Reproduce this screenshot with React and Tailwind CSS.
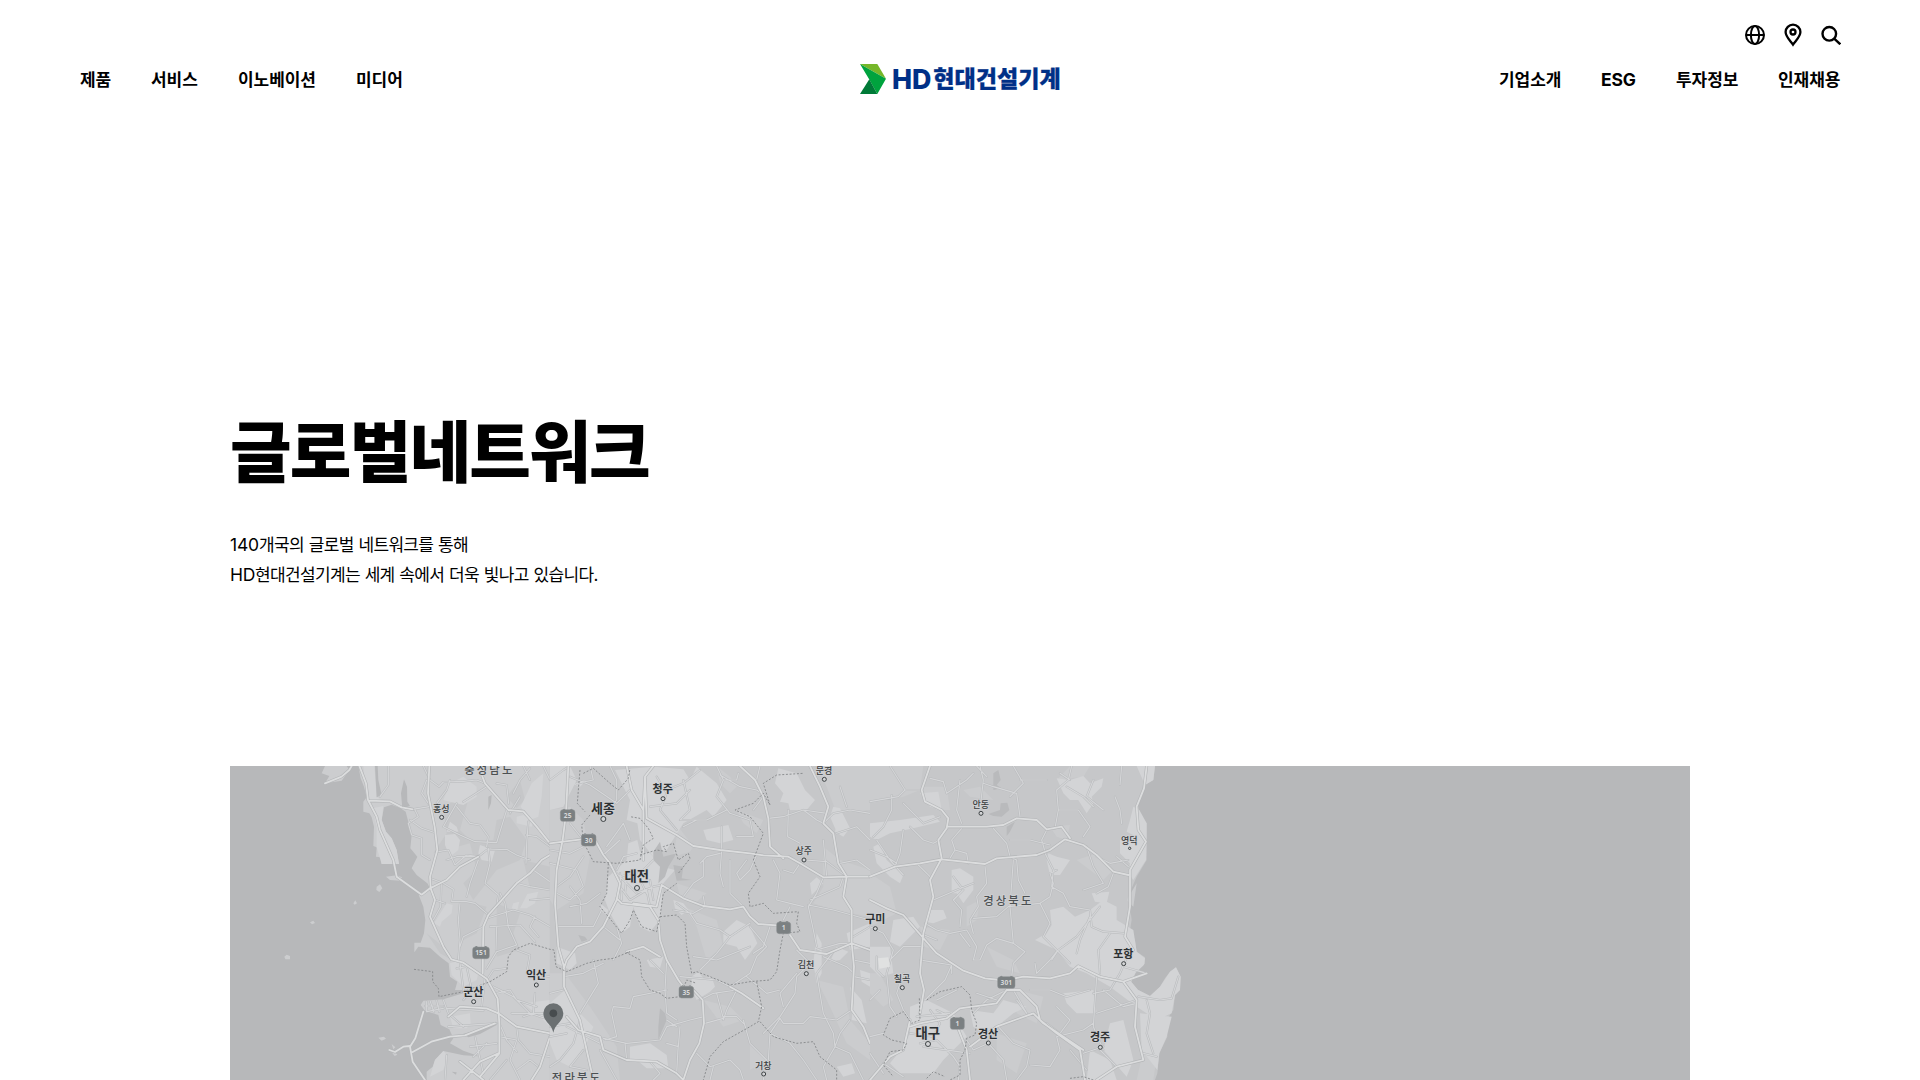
const SANS = "font-['Inter','Noto_Sans_CJK_KR',sans-serif]";

const leftNav = [
  { label: '제품', w: 'w-[31px]' },
  { label: '서비스', w: 'w-[47px]' },
  { label: '이노베이션', w: 'w-[78px]' },
  { label: '미디어', w: 'w-[47px]' },
];
const rightNav = [
  { label: '기업소개', w: 'w-[62px]' },
  { label: 'ESG', w: 'w-[35px]' },
  { label: '투자정보', w: 'w-[62px]' },
  { label: '인재채용', w: 'w-[62px]' },
];

function Nav({ items }) {
  return (
    <nav className="flex gap-10 leading-[28px] font-bold text-black">
      {items.map((i) => (
        <a
          key={i.label}
          className={`${i.w} whitespace-nowrap ${i.label === 'ESG' ? 'text-[17.5px] tracking-[-0.01em]' : 'text-[17px] tracking-[-0.003em]'}`}
        >
          {i.label}
        </a>
      ))}
    </nav>
  );
}

function Logo() {
  return (
    <svg className="block h-10 w-[204px]" viewBox="0 0 204 40">
      <path d="M2 4H19.3L28 18.8Z" fill="#76b72a" />
      <path d="M2 4L28 18.8L19.3 34L11.3 19.5Z" fill="#00a33e" />
      <path d="M11.3 19.3L19.3 34H2Z" fill="#007a37" />
      <text x="33.9" y="28.9" fontSize="27.5" fontWeight="800" fill="#003087" textLength="39.5" lengthAdjust="spacingAndGlyphs" fontFamily="Inter">
        HD
      </text>
      <text x="75.3" y="27" fontSize="22.5" fontWeight="900" fill="#003087" stroke="#003087" strokeWidth="0.3" textLength="127.4" lengthAdjust="spacingAndGlyphs" fontFamily="Noto Sans CJK KR">
        현대건설기계
      </text>
    </svg>
  );
}

function TopIcons() {
  return (
    <div className="flex items-center gap-[18px] text-black">
      <svg className="h-5 w-5" viewBox="0 0 20 20" fill="none" stroke="currentColor" strokeWidth="2">
        <circle cx="10" cy="10" r="9" />
        <ellipse cx="10" cy="10" rx="4.1" ry="9" />
        <path d="M1 10H19" />
      </svg>
      <svg className="h-6 w-5" viewBox="0 0 20 24" fill="none" stroke="currentColor">
        <path d="M10 21.7C7 17.5 2.6 13.7 2.6 9.1a7.4 7.4 0 0 1 14.8 0C17.4 13.7 13 17.5 10 21.7Z" strokeWidth="2.3" />
        <circle cx="10" cy="9" r="2.5" strokeWidth="2.3" />
      </svg>
      <svg className="h-5 w-5" viewBox="0 0 20 20" fill="none" stroke="currentColor" strokeWidth="2.4">
        <circle cx="8.3" cy="8.8" r="6.8" />
        <path d="M13.2 13.6L19.3 19.3" />
      </svg>
    </div>
  );
}

// Map geometry is drawn in three adjoining 960-unit-wide tiles.
const westLand =
  'M385 18L392 55 402 80 410 112 400 125V155L418 160 425 172 432 200 430 258 440 262 438 290 452 292 455 312H507L500 270 485 235 468 215 455 180 462 142 485 134 512 145 527 155 536 190 545 225 541 265 562 290 545 325 560 345 592 370 600 384 566 404 580 440 586 480 582 520 572 548H553V577L565 560 600 563 630 590 656 610 660 650 682 665 675 690H700V700L640 718 580 722 572 735 585 752 625 765 632 795 658 808 670 835 660 850 700 872 747 889 700 886 640 873 615 900 608 920 590 935V960H960V18Z';
const westIslands = [
  'M275 40L285 18H350L358 30 335 62 285 70 298 48Z',
  'M468 350L500 346 516 352 510 362 480 360Z',
  'M440 380L450 373 457 385 448 396 439 390Z',
  'M370 430L376 421 381 430 374 434Z',
  'M240 487L250 482 255 489 246 493Z',
  'M163 590L170 584 180 588V598H166Z',
  'M445 833L462 830 468 836 455 842Z',
  'M478 868L490 872 502 884 494 888Z',
  'M485 852L496 862 490 868Z',
];
const westWater = [
  'M435 18H443L445 60 455 105 440 112Z',
  'M517 145L513 100 522 58 531 80 532 125 540 138Z',
  'M700 822L745 808 795 788 800 795 750 822 715 832Z',
  'M775 110L785 105 783 130 775 150Z',
  'M665 935L680 937 678 944Z',
];
const westLight = [
  'M400 18H433L440 112 460 122 420 125 405 70Z',
  'M428 145L460 138 455 180 468 215 485 235 500 270 507 312H455L440 262V200Z',
  'M905 70L940 40 935 110 925 170 900 180 872 140Z',
  'M860 170L880 165 910 185 905 200 860 190Z',
  'M660 70L700 50 740 80 740 110 700 135 660 125 640 120Z',
  'M645 225L675 222 690 240 685 270 660 290 645 255Z',
  'M750 255L770 262 795 270 785 305 755 300 745 280Z',
  'M650 430L668 435 665 460 635 485 630 500 612 490Z',
  'M892 402L925 395 915 430 890 445 870 445Z',
  'M850 430L868 425 862 450 845 445Z',
  'M660 185L680 200 685 215 650 215Z',
  'M660 770L720 760 722 790 710 805 670 805Z',
  'M880 730L960 720V800L930 770Z',
  'M660 610L690 600 745 640 740 660 700 680 665 645Z',
  'M615 900L640 873 655 890 640 930 600 950Z',
];
const westDark = [
  'M610 280L720 250 740 330 700 370 730 420 800 330 870 300 890 240 840 170 800 180 790 240 720 240 690 210 720 100 640 140 650 220Z',
  'M690 420L770 440 740 520 690 545Z',
  'M590 520L640 560 665 600 630 580Z',
  'M800 430L870 460 850 520 870 570 800 590Z',
  'M830 110L870 60 885 120 860 145Z',
  'M880 300L960 320V390L900 385Z',
];
const westMajor = [
  'M388 18L408 70 414 120 440 170 450 210 490 300 500 350 575 404',
  'M415 122L480 124 515 142 548 148',
  'M598 18L594 100 614 200 622 270 600 350 602 385 615 420 600 470 640 560 664 598 700 608 770 656 803 716 808 790V880L750 950',
  'M745 18L765 70 835 150 880 154 920 200 960 250',
  'M960 285L935 300 900 340 860 370 775 465 760 500 758 640',
  'M580 755L556 835 540 860 548 905 585 960',
  'M548 876L604 845 660 830 705 826 795 790',
  'M575 404L600 385 650 360 690 320 745 290',
  'M478 870L495 876 520 860 540 858',
  'M655 770L690 740 770 745 805 760 860 800 960 820',
  'M960 830L930 920 905 960',
  'M700 960L750 905 805 880',
  'M690 905L760 960',
  'M335 50L358 30 365 18M335 50L285 70',
];
const westMinor = [
  'M745 290L770 270 830 268 860 285 900 300', 'M600 355L640 370 670 388 665 425 705 424 735 430 770 460',
  'M475 18V75L450 110', 'M580 18L600 60 627 80 640 66 700 64 740 60 765 70', 'M548 148L598 140', 'M555 150L565 170 535 190 545 225 575 235V285L600 300', 'M540 180L575 205 615 218',
  'M590 60L575 100 595 130', 'M620 130L650 90 660 60', 'M680 140L720 190 750 195 775 230 770 260', 'M680 130L640 200 690 225 735 245 800 248 830 150', 'M770 80L700 125', 'M800 70L830 75 836 130',
  'M625 275L655 270 675 315 710 285 745 290', 'M775 265L780 310 765 370 805 405 800 440', 'M895 185L890 250 888 310', 'M888 225L920 230 960 260', 'M810 400L825 430 835 500 860 555 800 575 770 625',
  'M690 430L685 480 690 540 685 600', 'M650 300L680 290 740 290', 'M745 300L720 370 710 410', 'M634 370L632 440 610 480', 'M615 420L645 430', 'M760 500L700 530 690 560', 'M800 500L798 570', 'M770 475L850 450 900 465 960 500', 'M900 420L960 415', 'M860 370L900 380 960 390', 'M910 330L960 365', 'M915 470L900 500 925 530', 'M780 500L870 495 915 545',
  'M690 608L700 690', 'M680 625L710 620 725 690 700 720', 'M770 660L790 630 830 625', 'M765 655L755 740', 'M790 680L850 710 900 760 960 780', 'M860 570L900 585 890 640 960 650', 'M800 700L840 690 860 720 920 740', 'M650 745L760 752', 'M640 720L655 760 700 800', 'M590 725V755L640 745M600 722L612 757M620 722L628 756M585 738H640', 'M655 800L800 790', 'M735 830L760 940', 'M808 830L860 840 840 900 870 960', 'M808 790L830 840 860 875', 'M720 860L800 850', 'M650 885L645 960', 'M770 850L730 890', 'M860 800L865 840 900 880 960 890', 'M860 930L900 900 925 920', 'M830 900L780 960', 'M915 700L910 760 880 770', 'M845 760H960', 'M870 110L840 160', 'M940 18L960 60', 'M900 25L870 60 850 100', 'M880 18L900 60',
];

const midLight = [
  'M0 18H60L80 60 40 140 0 150Z', 'M195 30L310 20 400 28 420 60 440 20 500 70 530 120 490 170 470 150 400 190 350 270 310 290 270 240 262 190 230 180 240 120Z',
  'M235 250L262 240 270 275 300 280 335 320 375 330 340 370 330 480 300 515 270 500 250 440 240 500 215 520 180 460 165 420 175 350 230 300Z',
  'M685 25L740 40 765 90 795 120 770 150 720 150 715 130 690 125 700 100 675 70Z', 'M460 210L535 195 550 240 510 250 470 240Z',
  'M560 480L600 500 622 550 585 600 560 560 520 550 520 515Z', 'M425 650L445 635 460 655 485 650 495 680 480 695 440 720 425 690Z', 'M780 370L800 352 820 370 785 405Z',
  'M860 190L895 210 880 230 855 215Z', 'M850 140L870 145 900 205 860 215 840 170Z', 'M800 520L815 550V640L800 670 790 610Z', 'M290 600L340 590 330 625 300 620Z', 'M890 520L960 490V560L900 570Z', 'M860 560L895 575 870 600 840 605Z',
  'M930 630L960 640V680L935 665Z', 'M900 680L935 720 950 790 905 780 910 730Z', 'M240 860L300 850 350 885 355 925 290 925 260 900 240 900Z', 'M45 690L60 730 90 760 130 800 110 850 90 890 60 920 20 900 0 850V730Z', 'M20 560L75 580 80 610 60 630 20 610Z', 'M860 920L905 910 915 940 880 950Z', 'M370 420L400 430 415 450 395 465 375 445Z', 'M150 430L175 450 170 465 150 450Z', 'M65 70L110 60 90 80Z',
];
const midMid = [
  'M0 150L60 140 100 180 120 290 100 400 20 450 0 420Z', 'M500 18L540 50 560 80 540 100 510 70Z', 'M800 18H960V150L860 160 830 80Z', 'M820 260L870 300 960 330V470L850 450 790 430 820 380Z', 'M0 640L45 640 120 740 200 860 210 960H0Z', 'M380 370L470 400 440 425 390 410Z', 'M800 660L880 680 900 780 960 850V900L890 850 840 740Z', 'M560 150L640 180 620 220 580 190Z', 'M385 200L430 260 420 275 370 290Z', 'M400 440L500 480 520 560 470 600 440 500Z', 'M460 720L540 740 580 780 520 800Z', 'M600 850L650 900 600 930Z',
];
const midDark = [
  'M310 275L330 245 340 290 380 280 355 320 345 350 325 370 330 320 310 300Z', 'M370 315L400 320 395 355 425 360 380 362 375 340Z', 'M85 525L105 530 112 540 95 545Z', 'M330 745L345 760 350 780 335 815 325 840V800Z',
];
const midMajor = [
  'M55 18L48 160 38 240 20 330 15 430 25 560 42 620V680L90 780 130 960', 'M0 250L40 245 95 238', 'M285 50L280 150V300', 'M310 18L285 50 290 175 380 225 430 258 510 270 600 280 640 286 715 290 750 310 820 352 890 350 960 350',
  'M230 18L245 90 280 150', 'M135 240L160 285 180 310 210 370 200 420 160 500 120 545 80 560 50 600 40 630', 'M200 415L215 430 300 440 325 480 330 540 350 600 385 660 400 680', 'M250 430L320 440 335 375 400 415 460 438 540 448 580 440 600 470 625 492 680 496', 'M720 525L750 570 830 582 905 550 960 570', 'M780 18L810 80 835 140 820 190 850 220 865 310 890 350 880 410 905 450V550L912 620 905 750 940 800 960 850', 'M430 690L458 720 462 790 448 850 420 900 400 960',
  'M570 18L615 60 640 110 655 175 660 260 700 295', 'M50 770L85 810 150 830 160 870 230 900 320 905 380 940 400 960', 'M230 575L280 560 330 590', 'M540 680L575 700 640 745',
];
const midMinor = [
  'M850 575L800 640 820 760', 'M655 900L660 820 690 775', 'M390 650L500 660 540 680', 'M20 500L130 500 155 450',
  'M0 60L40 30 60 18', 'M60 50L120 75 200 130 240 90', 'M180 18L200 60 200 120 160 170', 'M60 190L100 240', 'M0 270L60 280 100 260', 'M0 310L80 330 100 380 60 420 20 400', 'M100 290L60 350 20 380', 'M90 420L95 490', 'M60 440L110 430 150 400', 'M180 320L230 370 260 400 310 380 335 375', 'M210 350L280 330 310 300', 'M210 380L240 420 290 390 300 440', 'M200 330L220 290 260 280', 'M170 260L220 190 240 240', 'M160 285L210 240', 'M320 50L350 100 330 150 380 210', 'M350 90L400 70 450 30', 'M400 60L420 150 390 180 470 180 530 150', 'M420 90L380 130 300 140', 'M500 18L520 60 500 110 540 160', 'M510 45L570 80 620 90 650 110', 'M540 160L600 180 610 230 560 230', 'M640 110L610 150', 'M655 175L700 170 760 150 830 160', 'M715 150L713 230 750 250', 'M760 150L800 180 820 190', 'M515 200V270L510 340 520 380', 'M620 285L600 330 570 360 560 340 590 300', 'M540 300V400L580 440', 'M450 310L470 290 510 280', 'M460 300L460 350 430 370 400 410', 'M460 410L465 440 430 460 370 450', 'M380 430L420 460 440 490 510 510 540 530 500 580 450 630', 'M540 530L600 490', 'M600 500L650 560 620 590 600 640 540 680', 'M660 500L640 560 610 580', 'M670 300L690 340 680 420 720 430 760 440', 'M750 310L730 340 700 330', 'M765 300L830 305 890 350', 'M820 190L850 160 900 150 960 160', 'M870 80L890 140', 'M820 352L800 400 775 440 790 510 800 560', 'M775 435L850 450 960 480', 'M780 420L870 380 880 350', 'M720 440L700 480', 'M860 220L920 200 960 240', 'M870 310L920 300 960 330', 'M820 240L830 350', 'M800 570L870 550 905 550', 'M740 570L780 610 740 650 735 700 690 770 640 820', 'M820 590L890 620 912 640', 'M912 650L960 660', 'M910 600L960 610', 'M740 640L690 700 700 740', 'M690 775L700 790 760 790 780 770 860 780 905 750', 'M820 760L850 820 855 860 820 920 830 960', 'M855 860L900 880 940 960', 'M660 820L720 850 760 900 800 960', 'M580 780L600 850 650 900 640 960', 'M520 770L560 770 580 790', 'M465 790L520 775 500 700', 'M560 690L530 750 520 780', 'M450 720L490 700 560 690', 'M462 770L420 780 350 800 330 840 230 850 160 835', 'M385 850L380 940', 'M390 800L385 860 350 850', 'M350 780L380 800', 'M350 600L345 690 350 760 380 780', 'M250 710L240 745 190 740 185 760 200 830 165 840', 'M250 710L350 690', 'M225 850L230 900', 'M300 905L330 940 310 960', 'M130 600L145 670 90 760', 'M40 690L0 700', 'M42 650L100 640 160 610', 'M200 500L215 550 190 600', 'M160 500L210 540', 'M300 600L340 640', 'M430 590L500 600 600 560', 'M0 800L60 790M0 830L50 820', 'M90 780L70 850 30 900 0 920', 'M50 800L150 850', 'M100 870L60 920 110 930', 'M150 870L200 960', 'M440 880L480 920 540 900 570 930 580 960', 'M490 920L480 960', 'M590 650L650 700 690 690', 'M900 780L870 820 855 860', 'M960 500L910 530', 'M120 18L130 60 80 70', 'M520 60H560L565 40', 'M400 200L440 180M630 18L620 60', 'M60 380L90 420', 'M210 340L215 420M230 345L225 400M300 360L310 420M260 340L290 400',
];

const eastLight = [
  'M560 55L600 60 640 48 660 70 700 55 695 80 665 110 670 130 650 160 625 120 600 120 580 100Z', 'M790 140L808 150 830 190V235L800 230 770 215 780 180Z', 'M750 240L800 230 830 235 828 300 790 360 775 340 780 310 750 280Z', 'M540 450L580 440 615 470 660 450 700 420 740 440 740 480 790 510 800 575 825 595 820 625 785 665 805 690 840 708 870 680 900 635 918 622 932 650 930 690 915 705 905 760 860 780 800 740 720 680 650 640 600 620 560 570 495 540 530 520 545 495Z', 'M245 330L270 325 310 350 310 390 280 430 260 400 245 400Z', 'M535 280L560 290 600 300 570 345 540 345 530 300Z', 'M70 480L130 470 150 500 90 560 60 545Z', 'M150 100L205 95 215 150 180 140Z', 'M0 190L90 180 190 165 210 185 130 205 60 220 20 240 0 230Z', 'M175 450L220 450 230 475 190 490 165 485Z', 'M580 700L670 690 680 760 620 760 590 730Z', 'M665 400L718 395 710 430 675 425Z', 'M120 740L170 720 250 760 290 830 250 870 220 900 190 940 90 940 60 910 100 860 120 820Z', 'M720 790L760 780 790 900 770 950 700 870Z', 'M810 760L905 770 890 830 868 880 862 930 815 870Z', 'M300 750L370 760 400 720 470 740 430 760 380 800 340 820 310 800Z', 'M660 870L720 900 740 960H650Z', 'M800 18H855L850 60 825 75Z', 'M0 560L60 560 70 640 30 650 0 620Z', 'M10 260L30 250 50 300 100 345 90 370 60 350 20 310Z',
];
const eastMid = [
  'M0 18H160L150 90 100 110 0 130Z', 'M0 340L60 380 80 460 0 500Z', 'M30 640L70 720 40 740 0 700V640Z', 'M150 80L230 80 240 150 200 150Z', 'M280 90L330 80 370 120 300 110Z', 'M540 200L600 195 590 240 560 230Z', 'M350 560L430 600 450 640 380 620Z', 'M290 440L330 420 320 480 290 500Z', 'M560 60L600 18H660L640 50Z', 'M620 300L680 280 730 330 700 360Z', 'M440 690L520 710 500 790 440 760Z', 'M820 870L860 890 850 960H800Z', 'M380 820L470 850 440 940 380 900Z', 'M150 500L240 510 210 570 160 560Z', 'M800 370L790 440 770 420Z',
];
const eastDark = ['M370 40L385 30 392 60 380 75 395 85 370 90Z', 'M355 162L390 150 392 130 412 128 418 150 395 170 370 168Z', 'M410 200L435 185 420 215 410 228Z'];
const eastMajor = [
  'M180 18L155 90 165 125 215 150 235 175 230 205 205 240 215 295 180 360 190 410 160 520 150 640 162 690 150 760', 'M0 350L75 320 150 310 215 298 345 312 380 295 500 285 540 270 585 238 640 255 680 285 730 335 775 345', 'M0 420L50 445 100 465 165 540 200 580 280 632 345 655 390 660', 'M830 18L822 85 800 140 805 210 828 245 780 330V440L765 530 790 570', 'M435 655L460 650 540 655 600 640 625 618 690 650 760 665 830 640', 'M410 690L380 730 270 745 230 775 150 790 120 800', 'M410 690L450 690 500 740 510 780 560 820 630 870 645 960', 'M120 780L100 870 60 890 0 960', 'M235 200H350L400 195 440 175 500 180 530 208 575 200 600 235', 'M760 665L800 720 795 800 815 880 820 900 740 920 680 960', 'M262 800L290 870 300 960', 'M300 860L380 800 490 760 520 790 640 870',
];
const eastMinor = [
  'M60 18L105 90 150 90', 'M105 90L85 110 0 125', 'M65 105V150L40 200 10 230', 'M180 55L220 65 230 100 290 60 310 40', 'M270 60L260 150 275 190', 'M330 18L340 60 330 150', 'M340 70L370 80 440 100 450 170', 'M430 18L460 70 420 110', 'M450 60H530', 'M605 18L595 60 560 90 565 150 555 205', 'M590 80L640 110 670 140', 'M670 60L650 110 700 150', 'M755 18L750 75', 'M735 110L750 150 755 190', 'M565 150L625 150 660 200 640 230', 'M530 210L515 240 525 275', 'M370 205L410 250 420 290 440 300 445 360 465 400', 'M275 205L245 240 255 270 240 295', 'M255 270L290 280 295 310', 'M430 300L420 440 430 550 465 575 430 610 425 650', 'M430 550L380 535 350 555 330 600 310 600', 'M345 320L350 370 320 410 325 440 300 480 310 520', 'M190 420L260 390 310 370', 'M250 350L280 390 250 420 275 450 270 500', 'M165 490L200 510 240 520 290 510 320 560 310 600', 'M310 475L380 470 415 440', 'M415 440L510 430 540 410 550 370 540 340 560 330', 'M510 430L540 490 520 530 560 570 600 610', 'M525 280L550 330 545 380 580 400 600 440 660 450 665 500 700 515 765 520', 'M650 260L670 320 700 370 640 390', 'M680 290L720 310 775 300', 'M730 340L715 380 680 400', 'M775 320L740 290', 'M565 570L620 530 690 440', 'M620 580L630 540 660 470', 'M560 575L540 600 500 640', 'M690 640L685 570 720 520', 'M680 650L670 800 700 870', 'M780 570L750 640 720 690 670 700', 'M700 690L760 740 800 730', 'M680 760L740 740 800 720', 'M830 640L760 620', 'M805 710L870 720 905 715 925 650', 'M830 720L840 760 830 820 850 880', 'M820 880L860 890', 'M690 870L740 920', 'M100 130L140 170 160 190 210 170', 'M20 240L60 300 100 345', 'M0 270L50 290 80 310', 'M100 210L90 280 75 320', 'M120 200L160 240 190 250 210 240', 'M140 310L180 350', 'M0 500L40 520 70 570 50 640 60 740 80 770', 'M20 590V630L40 650M60 600L100 560 160 560', 'M150 600L180 605 245 615 225 660 165 720', 'M245 615V640', 'M100 640L80 700 100 750 120 780', 'M150 720L200 720 260 690', 'M180 750L210 790 190 830 120 820', 'M200 750L260 780M140 770L240 760', 'M150 850L200 840 250 890 270 920 265 960', 'M40 910L100 950', 'M355 850L400 900 410 960', 'M355 850L310 870 290 840', 'M385 800L430 850 480 870 470 920 440 960', 'M480 915L540 920 570 870 560 830', 'M480 690L540 690 590 710 660 690', 'M430 690L470 760 440 720', 'M530 790L570 820 600 780 560 740', 'M560 830L640 810 670 790', 'M640 880L700 860', 'M600 870L650 930', 'M410 690L350 720 310 760', 'M320 700L380 720', 'M30 690L0 720', 'M40 820L0 830', 'M0 880L40 940', 'M545 600L565 570M500 640L495 610', 'M160 860L300 880', 'M300 560L270 520', 'M570 40L600 60M350 50L320 18', 'M540 255L480 240 420 240', 'M150 520L200 540',
];
const borders = [
  'M552 628L608 635V665L625 685 627 710 700 695 780 665 830 635 835 590 850 570 900 550 960 568 972 570 978 620 1010 635 1070 610 1110 600 1150 595 1200 575 1190 578 1230 600 1235 650 1260 690 1290 700 1310 715 1350 710 1370 660 1400 670',
  'M1060 40L1090 25 1140 70 1165 90 1195 55 1200 25M1050 30L1045 90 1042 130 1065 155',
  'M1080 165L1055 195 1060 245 1090 305 1160 310 1230 300 1240 255 1270 235 1255 205 1230 175 1200 170',
  'M1230 285L1280 270 1310 275 1300 260 1330 250 1345 300 1375 280 1380 295 1345 340',
  'M1135 310L1130 400 1110 440 1135 470 1175 520 1200 480 1210 450 1235 500 1280 515 1290 470 1300 400 1340 370',
  'M1290 470L1340 465 1365 490 1370 560 1385 640 1400 635 1440 650 1500 675 1560 665 1620 660 1640 635 1650 570 1660 520 1710 515 1700 490 1705 455 1630 460 1600 430 1560 440 1555 400 1590 350 1570 300 1600 220 1560 170 1515 150 1570 130 1600 100 1620 135 1600 70 1640 45 1720 40',
  'M1580 665L1595 740 1585 785 1560 800 1480 845 1440 890 1420 960', 'M1590 785L1630 830 1700 850 1750 845 1770 890 1820 930 1820 960',
  'M2090 720L2130 695 2195 680 2220 705 2225 750 2240 790 2235 825 2210 835 2205 870 2190 900 2190 945 2160 960M2068 715L2070 780 2045 790 2020 755 1980 775 1960 825 1985 840 2030 850 2020 870 1980 875 1960 915 1990 950', 'M2520 955L2560 950 2590 960M2090 955L2110 935 2145 950',
];

const cities = [
  ['홍성', 634, 155, 27, 172, 500], ['군산', 730, 708, 33, 725, 700], ['익산', 918, 658, 33, 675, 700],
  ['청주', 1298, 99, 33, 116, 700], ['세종', 1119, 159, 39, 177, 700], ['대전', 1220, 363, 40, 384, 700],
  ['문경', 1782, 41, 27, 58, 500], ['상주', 1721, 282, 27, 300, 500], ['김천', 1728, 624, 27, 641, 500],
  ['거창', 1600, 926, 27, 942, 500], ['안동', 2252, 143, 27, 160, 500], ['영덕', 2698, 251, 27, 265, 500],
  ['구미', 1936, 489, 33, 506, 700], ['칠곡', 2016, 665, 27, 683, 500], ['포항', 2680, 593, 33, 611, 700],
  ['대구', 2093, 834, 40, 852, 700], ['경산', 2274, 833, 33, 849, 700], ['경주', 2610, 844, 33, 862, 700],
];
const provinces = [['충성남도', 775, 41], ['전라북도', 1038, 966], ['경상북도', 2332, 436]];
const shields = [['151', 753, 578, 50], ['25', 1013, 166, 44], ['30', 1076, 240, 44], ['1', 1661, 503, 42], ['35', 1369, 696, 44], ['301', 2329, 667, 52], ['1', 2182, 790, 42]];

const Fills = ({ list, color }) => <path d={list.join('')} fill={color} />;

function Roads({ major, minor }) {
  const a = minor.join('');
  const b = major.join('');
  return (
    <g fill="none" strokeLinejoin="round" strokeLinecap="round">
      <path d={a} stroke="#b8babc" strokeWidth="6.4" />
      <path d={a} stroke="#d5d6d8" strokeWidth="3.4" />
      <path d={b} stroke="#b3b5b7" strokeWidth="9" />
      <path d={b} stroke="#dcddde" strokeWidth="5.4" />
    </g>
  );
}

function NetworkMap() {
  return (
    <svg className="block h-full w-full" viewBox="0 0 1460 314" fontFamily="Noto Sans CJK KR">
      <rect width="1460" height="314" fill="#b7b8ba" />
      <g transform="translate(0 -6) scale(.333333)">
        <path d={westLand} fill="#cccdcf" />
        <Fills list={westIslands} color="#cccdcf" />
        <Fills list={westDark} color="#c6c7c9" />
        <Fills list={westLight} color="#d3d4d6" />
        <Fills list={westWater} color="#b7b8ba" />
        <Roads major={westMajor} minor={westMinor} />
        <g transform="translate(960 0)">
          <path d="M-1 18H961V960H-1Z" fill="#c6c7c9" />
          <Fills list={midMid} color="#cbccce" />
          <Fills list={midLight} color="#d3d4d6" />
          <Fills list={midDark} color="#b9babc" />
          <Roads major={midMajor} minor={midMinor} />
        </g>
        <g transform="translate(1920 0)">
          <path d="M0 18H855L850 60 825 75 818 105 803 130 812 170 830 190V300L800 350 785 385 780 440 785 480 780 510 795 540 800 575 825 592V612L797 638 784 665 805 690 840 708 870 680 885 655 900 635 918 622 932 650 930 690 915 705 910 750 890 780 892 830 868 880 862 940 855 960H0Z" fill="#c6c7c9" />
          <Fills list={eastMid} color="#cbccce" />
          <Fills list={eastLight} color="#d3d4d6" />
          <Fills list={eastDark} color="#b9babc" />
          <path d="M825 592V612L797 638 784 665 805 690 818 680 800 660 840 600Z" fill="#b7b8ba" />
          <Roads major={eastMajor} minor={eastMinor} />
          <path d="M24 595L55 592 60 620 28 626Z" fill="#e0e1e1" />
        </g>
        <path d={borders.join('')} fill="none" stroke="#858789" strokeWidth="2.7" strokeDasharray="6 5" strokeLinejoin="round" />
        {shields.map(([n, x, y, w]) => (
          <g key={n + x}>
            <rect x={x - w / 2} y={y - 17} width={w} height="35" rx="8" fill="#7b8082" stroke="#8e9294" strokeWidth="1.5" />
            <path d={`M${x - w / 2 + 6} ${y - 17}l5 -3 5 3h${w - 32}l5 -3 5 3z`} fill="#7b8082" />
            <text x={x} y={y + 8} fontSize="20" fontWeight="700" textAnchor="middle" fill="#d8d9da" fontFamily="Open Sans">{n}</text>
          </g>
        ))}
        <g textAnchor="middle" paintOrder="stroke" stroke="#d0d1d3" strokeWidth="5" strokeLinejoin="round">
          {cities.map(([name, x, y, size, , weight]) => (
            <text key={name} x={x} y={y} fontSize={size} fontWeight={weight} fill={weight === 700 ? '#2c3032' : '#3a3e40'}>{name}</text>
          ))}
          {provinces.map(([name, x, y]) => (
            <text key={name} x={x + 3} y={y} fontSize="34" fontWeight="500" letterSpacing="6.5" fill="#4c5052">{name}</text>
          ))}
        </g>
        {cities.map(([name, x, , size, cy]) => (
          <circle key={name} cx={x + (name === '구미' ? 0 : 1)} cy={cy} r={name === '영덕' ? 3.5 : size > 35 ? 7.5 : 6} fill="#d4d5d7" stroke="#33383a" strokeWidth="2.8" />
        ))}
        <path d="M970 818C965 791 940 785 940 760a30 30 0 0 1 60 0C1000 785 975 791 970 818Z" fill="#6b7072" />
        <circle cx="970" cy="760" r="11.5" fill="#474c4e" />
      </g>
    </svg>
  );
}

export default function App() {
  return (
    <div className={`h-[1080px] overflow-hidden bg-white text-black ${SANS}`}>
      <header className="flex h-[111px] flex-col px-20 pt-[23px]">
        <div className="-mr-px flex h-6 justify-end">
          <TopIcons />
        </div>
        <div className="mt-[13px] grid h-10 grid-cols-[1fr_204px_1fr] items-center">
          <Nav items={leftNav} />
          <Logo />
          <div className="flex justify-end">
            <Nav items={rightNav} />
          </div>
        </div>
      </header>
      <main className="mx-auto w-[1460px]">
        <section className="flex h-[655px] flex-col pt-[292px]">
          <h1 className="h-[100px] text-[67px] leading-[100px] font-black tracking-[-0.027em]">글로벌네트워크</h1>
          <p className="mt-[27px] text-[17px] leading-[30px] tracking-[-0.038em] [word-spacing:0.6px]">
            <span className="text-[17.5px] tracking-[-0.01em]">140</span>개국의 글로벌 네트워크를 통해
            <br />
            <span className="text-[17.5px] tracking-[-0.02em]">HD</span>현대건설기계는 세계 속에서 더욱 빛나고 있습니다.
          </p>
        </section>
        <section className="h-[314px]">
          <NetworkMap />
        </section>
      </main>
    </div>
  );
}
